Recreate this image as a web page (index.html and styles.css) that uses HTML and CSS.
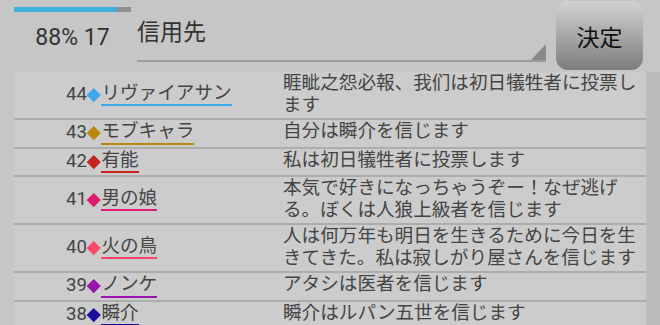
FILE: index.html
```html
<!DOCTYPE html>
<html lang="ja">
<head>
  <meta charset="UTF-8" />
  <title>投票</title>
  <link rel="stylesheet" href="styles.css">
</head>
<body>
  <div class="header">
    <div class="status">
      <div class="progress"><div class="progress-fill" style="width: 88%"></div></div>
      <div class="status-text">88% 17</div>
    </div>
    <div class="spinner">信用先</div>
    <button class="decide">決定</button>
  </div>

  <div class="main">
    <div class="list">
      <div class="row">
        <div class="who">44<span class="mark" style="background:#3ea6ea"></span><span class="name" style="border-color:#3ea6ea">リヴァイアサン</span></div>
        <div class="msg">睚眦之怨必報、我们は初日犠牲者に投票します</div>
      </div>
      <div class="row">
        <div class="who">43<span class="mark" style="background:#b8870c"></span><span class="name" style="border-color:#b8870c">モブキャラ</span></div>
        <div class="msg">自分は瞬介を信じます</div>
      </div>
      <div class="row">
        <div class="who">42<span class="mark" style="background:#c9221a"></span><span class="name" style="border-color:#c9221a">有能</span></div>
        <div class="msg">私は初日犠牲者に投票します</div>
      </div>
      <div class="row">
        <div class="who">41<span class="mark" style="background:#e01a72"></span><span class="name" style="border-color:#e01a72">男の娘</span></div>
        <div class="msg">本気で好きになっちゃうぞー！なぜ逃げる。ぼくは人狼上級者を信じます</div>
      </div>
      <div class="row">
        <div class="who">40<span class="mark" style="background:#fb4868"></span><span class="name" style="border-color:#fb4868">火の鳥</span></div>
        <div class="msg">人は何万年も明日を生きるために今日を生きてきた。私は寂しがり屋さんを信じます</div>
      </div>
      <div class="row">
        <div class="who">39<span class="mark" style="background:#9c14b0"></span><span class="name" style="border-color:#9c14b0">ノンケ</span></div>
        <div class="msg">アタシは医者を信じます</div>
      </div>
      <div class="row">
        <div class="who">38<span class="mark" style="background:#1a0c9e"></span><span class="name" style="border-color:#1a0c9e">瞬介</span></div>
        <div class="msg">瞬介はルパン五世を信じます</div>
      </div>
    </div>
    <div class="track"></div>
  </div>
</body>
</html>
```

FILE: styles.css
```css
body {
  margin: 0;
  background: #c6c6c6;
  color: #444;
  font-family: Roboto, "Noto Sans CJK JP", sans-serif;
  overflow: hidden;
}
.header {
  display: flex;
  height: 72px;
}
.status {
  width: 117px;
  margin-left: 14px;
}
.progress {
  height: 5px;
  margin-top: 7px;
  background: #8f8f8f;
}
.progress-fill {
  height: 100%;
  background: #3db0dd;
}
.status-text {
  margin-top: 12px;
  font-size: 23px;
  line-height: 27px;
  text-align: center;
  color: #333;
}
.spinner {
  position: relative;
  width: 409px;
  height: 62px;
  margin-left: 6px;
  padding-top: 18px;
  box-sizing: border-box;
  font-size: 23px;
  line-height: 30px;
  color: #333;
  border-bottom: 2px solid #9c9c9c;
}
.spinner::after {
  content: "";
  position: absolute;
  right: 0;
  bottom: 0;
  border-left: 15px solid transparent;
  border-bottom: 16px solid #8a8a8a;
}
.decide {
  width: 87px;
  height: 69px;
  margin: 1px 0 0 10px;
  padding: 0;
  border: none;
  border-radius: 12px;
  background: linear-gradient(#d2d2d2, #7d7d7d);
  font-family: "Noto Sans CJK JP", sans-serif;
  font-size: 23px;
  color: #111;
}
.main {
  display: flex;
}
.list {
  flex: 1;
  margin-left: 14px;
  background: #cccccc;
}
.track {
  width: 14px;
  background: #bcbcbc;
}
.row {
  display: grid;
  grid-template-columns: 269px 1fr;
  padding: 1px 0 2px;
  border-bottom: 2px solid #adadad;
  font-size: 18.6px;
  line-height: 21.5px;
}
.who {
  display: flex;
  align-items: center;
  padding-left: 52px;
}
.mark {
  width: 9.5px;
  height: 9.5px;
  margin: 0 2.5px;
  transform: rotate(45deg);
}
.name {
  border-bottom: 2px solid;
}
.msg {
  padding-right: 8px;
}
```
